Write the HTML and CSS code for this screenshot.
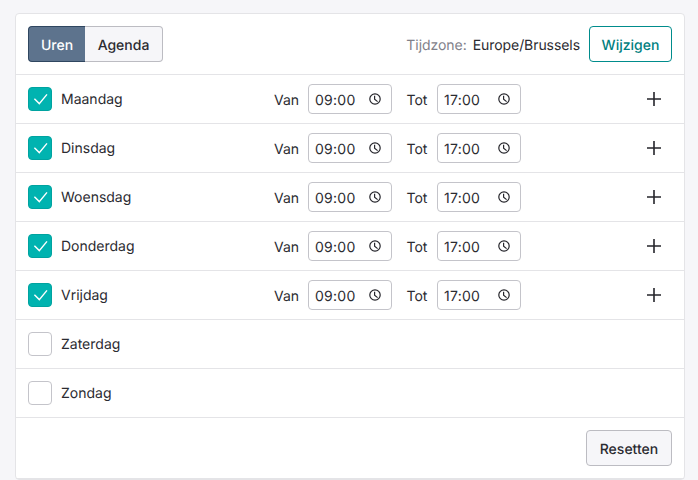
FILE: index.html
```html
<!DOCTYPE html>
<html lang="nl">
<head>
<meta charset="utf-8">
<title>Beschikbaarheid</title>
<link rel="stylesheet" href="styles.css">
</head>
<body>
<main class="card">
  <header class="head">
    <div class="toggle">
      <button class="seg seg-on">Uren</button>
      <button class="seg">Agenda</button>
    </div>
    <div class="tz">
      <span class="tz-label">Tijdzone:</span>
      <span class="tz-value">Europe/Brussels</span>
      <button class="btn-outline">Wijzigen</button>
    </div>
  </header>

  <div class="row">
    <span class="check on"><svg viewBox="0 0 22 22" class="tick"><path d="M5.4 10.8l4.9 4.8 7.7-9.2"/></svg></span>
    <span class="day">Maandag</span>
    <span class="lbl-van">Van</span>
    <div class="time"><span>09:00</span><svg viewBox="0 0 14 14" class="clock"><circle cx="7" cy="7" r="5.2"/><path d="M6.6 3.8V7.2l3 2.4"/></svg></div>
    <span class="lbl-tot">Tot</span>
    <div class="time"><span>17:00</span><svg viewBox="0 0 14 14" class="clock"><circle cx="7" cy="7" r="5.2"/><path d="M6.6 3.8V7.2l3 2.4"/></svg></div>
    <svg viewBox="0 0 14 14" class="plus"><path d="M7 0v14M0 7h14"/></svg>
  </div>
  <div class="row">
    <span class="check on"><svg viewBox="0 0 22 22" class="tick"><path d="M5.4 10.8l4.9 4.8 7.7-9.2"/></svg></span>
    <span class="day">Dinsdag</span>
    <span class="lbl-van">Van</span>
    <div class="time"><span>09:00</span><svg viewBox="0 0 14 14" class="clock"><circle cx="7" cy="7" r="5.2"/><path d="M6.6 3.8V7.2l3 2.4"/></svg></div>
    <span class="lbl-tot">Tot</span>
    <div class="time"><span>17:00</span><svg viewBox="0 0 14 14" class="clock"><circle cx="7" cy="7" r="5.2"/><path d="M6.6 3.8V7.2l3 2.4"/></svg></div>
    <svg viewBox="0 0 14 14" class="plus"><path d="M7 0v14M0 7h14"/></svg>
  </div>
  <div class="row">
    <span class="check on"><svg viewBox="0 0 22 22" class="tick"><path d="M5.4 10.8l4.9 4.8 7.7-9.2"/></svg></span>
    <span class="day">Woensdag</span>
    <span class="lbl-van">Van</span>
    <div class="time"><span>09:00</span><svg viewBox="0 0 14 14" class="clock"><circle cx="7" cy="7" r="5.2"/><path d="M6.6 3.8V7.2l3 2.4"/></svg></div>
    <span class="lbl-tot">Tot</span>
    <div class="time"><span>17:00</span><svg viewBox="0 0 14 14" class="clock"><circle cx="7" cy="7" r="5.2"/><path d="M6.6 3.8V7.2l3 2.4"/></svg></div>
    <svg viewBox="0 0 14 14" class="plus"><path d="M7 0v14M0 7h14"/></svg>
  </div>
  <div class="row">
    <span class="check on"><svg viewBox="0 0 22 22" class="tick"><path d="M5.4 10.8l4.9 4.8 7.7-9.2"/></svg></span>
    <span class="day">Donderdag</span>
    <span class="lbl-van">Van</span>
    <div class="time"><span>09:00</span><svg viewBox="0 0 14 14" class="clock"><circle cx="7" cy="7" r="5.2"/><path d="M6.6 3.8V7.2l3 2.4"/></svg></div>
    <span class="lbl-tot">Tot</span>
    <div class="time"><span>17:00</span><svg viewBox="0 0 14 14" class="clock"><circle cx="7" cy="7" r="5.2"/><path d="M6.6 3.8V7.2l3 2.4"/></svg></div>
    <svg viewBox="0 0 14 14" class="plus"><path d="M7 0v14M0 7h14"/></svg>
  </div>
  <div class="row">
    <span class="check on"><svg viewBox="0 0 22 22" class="tick"><path d="M5.4 10.8l4.9 4.8 7.7-9.2"/></svg></span>
    <span class="day">Vrijdag</span>
    <span class="lbl-van">Van</span>
    <div class="time"><span>09:00</span><svg viewBox="0 0 14 14" class="clock"><circle cx="7" cy="7" r="5.2"/><path d="M6.6 3.8V7.2l3 2.4"/></svg></div>
    <span class="lbl-tot">Tot</span>
    <div class="time"><span>17:00</span><svg viewBox="0 0 14 14" class="clock"><circle cx="7" cy="7" r="5.2"/><path d="M6.6 3.8V7.2l3 2.4"/></svg></div>
    <svg viewBox="0 0 14 14" class="plus"><path d="M7 0v14M0 7h14"/></svg>
  </div>
  <div class="row">
    <span class="check"></span>
    <span class="day">Zaterdag</span>
  </div>
  <div class="row">
    <span class="check"></span>
    <span class="day">Zondag</span>
  </div>
  <footer class="foot">
    <button class="btn-reset">Resetten</button>
  </footer>
</main>
</body>
</html>
```

FILE: styles.css
```css
* { box-sizing: border-box; }
html, body { height: 100%; }
body {
  margin: 0;
  padding: 13px 13px 0 15px;
  background: #f6f6f9;
  font-family: Inter, "Liberation Sans", sans-serif;
  font-size: 14px;
  color: #2b2b31;
  overflow: hidden;
  text-rendering: geometricPrecision;
}
button { font-family: inherit; cursor: pointer; text-rendering: geometricPrecision; }

.card {
  width: 670px;
  background: #fff;
  border: 1px solid #e4e4e7;
  border-radius: 4px;
}
.head {
  height: 60px;
  padding: 12px;
  display: flex;
  align-items: center;
  justify-content: space-between;
}
.toggle { display: flex; height: 36px; }
.seg {
  height: 36px;
  border: 1px solid #bcbcc2;
  background: #f6f6f9;
  color: #2b2b31;
  font-size: 14px;
  font-weight: 550;
  padding: 2px 0 0;
  width: 78px;
  border-left: 0;
  border-radius: 0 4px 4px 0;
}
.seg-on {
  width: 57px;
  background: #5d738d;
  border: 1px solid #2f4660;
  border-right: 0;
  color: #fff;
  border-radius: 4px 0 0 4px;
}
.tz { display: flex; align-items: center; }
.tz-label { color: #81818a; margin-right: 6px; padding-top: 2px; letter-spacing: -0.05px; }
.tz-value { margin-right: 9px; padding-top: 2px; letter-spacing: -0.07px; }
.btn-outline {
  width: 83px;
  height: 36px;
  padding: 2px 0 0;
  background: #fff;
  border: 1px solid #008c8c;
  border-radius: 4px;
  color: #008080;
  font-size: 14px;
  font-weight: 550;
}
.row {
  height: 49px;
  border-top: 1px solid #e4e4e7;
  padding: 0 12px;
  display: flex;
  align-items: center;
}
.check {
  width: 24px;
  height: 24px;
  flex: none;
  border: 1px solid #c4c4ca;
  border-radius: 4px;
  background: #fff;
  display: flex;
  margin-right: 9px;
}
.check.on { background: #00b3b0; border-color: #00a3a0; }
.tick { width: 22px; height: 22px; fill: none; stroke: #fff; stroke-width: 1.4; }
.day { width: 213px; flex: none; }
.lbl-van { width: 34px; flex: none; padding-top: 2px; }
.lbl-tot { width: 30.5px; flex: none; margin-left: 14.5px; padding-top: 2px; }
.time {
  width: 84px;
  height: 30px;
  flex: none;
  border: 1px solid #c4c4ca;
  border-radius: 4px;
  background: #fff;
  padding: 2px 9px 0 6px;
  display: flex;
  align-items: center;
  justify-content: space-between;
  font-size: 14px;
  letter-spacing: 0.25px;
}
.clock { width: 14px; height: 14px; margin-top: -2px; fill: none; stroke: #25252b; stroke-width: 1.2; }
.plus {
  width: 14px;
  height: 14px;
  margin-left: auto;
  margin-right: 11px;
  fill: none;
  stroke: #25252b;
  stroke-width: 1.6;
}
.foot {
  height: 62px;
  border-top: 1px solid #e4e4e7;
  border-bottom: 1px solid #e4e4e7;
  padding: 12px;
  display: flex;
  justify-content: flex-end;
  align-items: center;
}
.btn-reset {
  width: 86px;
  height: 36px;
  padding: 2px 0 0;
  background: #f6f6f9;
  border: 1px solid #bcbcc2;
  border-radius: 4px;
  color: #2b2b31;
  font-size: 14px;
  font-weight: 500;
}
```
